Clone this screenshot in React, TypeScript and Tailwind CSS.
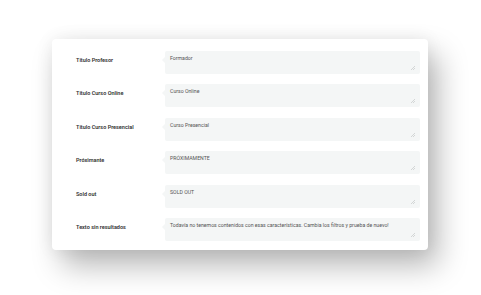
const rows = [
  { label: "Título Profesor", value: "Formador" },
  { label: "Título Curso Online", value: "Curso Online" },
  { label: "Título Curso Presencial", value: "Curso Presencial" },
  { label: "Próximante", value: "PRÓXIMAMENTE" },
  { label: "Sold out", value: "SOLD OUT" },
  {
    label: "Texto sin resultados",
    value:
      "Todavía no tenemos contenidos con esas características. Cambia los filtros y prueba de nuevo!"
  }
];

function Field({ value }: { value: string }) {
  return (
    <div className="relative h-[23px] flex-1 rounded-[2px] bg-[#f4f6f6] px-[5px] pt-[4px] text-[5.2px] leading-[7px] text-[#555]">
      <span className="absolute left-[-3px] top-[6px] h-0 w-0 border-y-[3px] border-r-[3px] border-y-transparent border-r-[#f4f6f6]" />
      {value}
      <svg
        className="absolute bottom-[4px] right-[5px]"
        width="4"
        height="4"
        viewBox="0 0 4 4"
      >
        <path d="M4 0L0 4M4 2L2 4" stroke="#c4c8c8" strokeWidth="0.7" />
      </svg>
    </div>
  );
}

export default function App() {
  return (
    <div
      className="h-[295px] w-[481px] bg-white pl-[52px] pt-[39px]"
      style={{ fontFamily: "Roboto, 'Liberation Sans', sans-serif" }}
    >
      <div className="flex h-[211px] w-[376px] flex-col gap-[10.4px] rounded-[4px] bg-white pb-[9px] pl-[24px] pr-[8px] pt-[12px] shadow-[0_0_18px_rgba(0,0,0,0.07),10px_16px_30px_rgba(0,0,0,0.28)]">
        {rows.map((row) => (
          <div className="flex items-start" key={row.label}>
            <div className="w-[89px] pt-[6px] text-[5.5px] font-semibold leading-[7px] text-[#333]">
              {row.label}
            </div>
            <Field value={row.value} />
          </div>
        ))}
      </div>
    </div>
  );
}
